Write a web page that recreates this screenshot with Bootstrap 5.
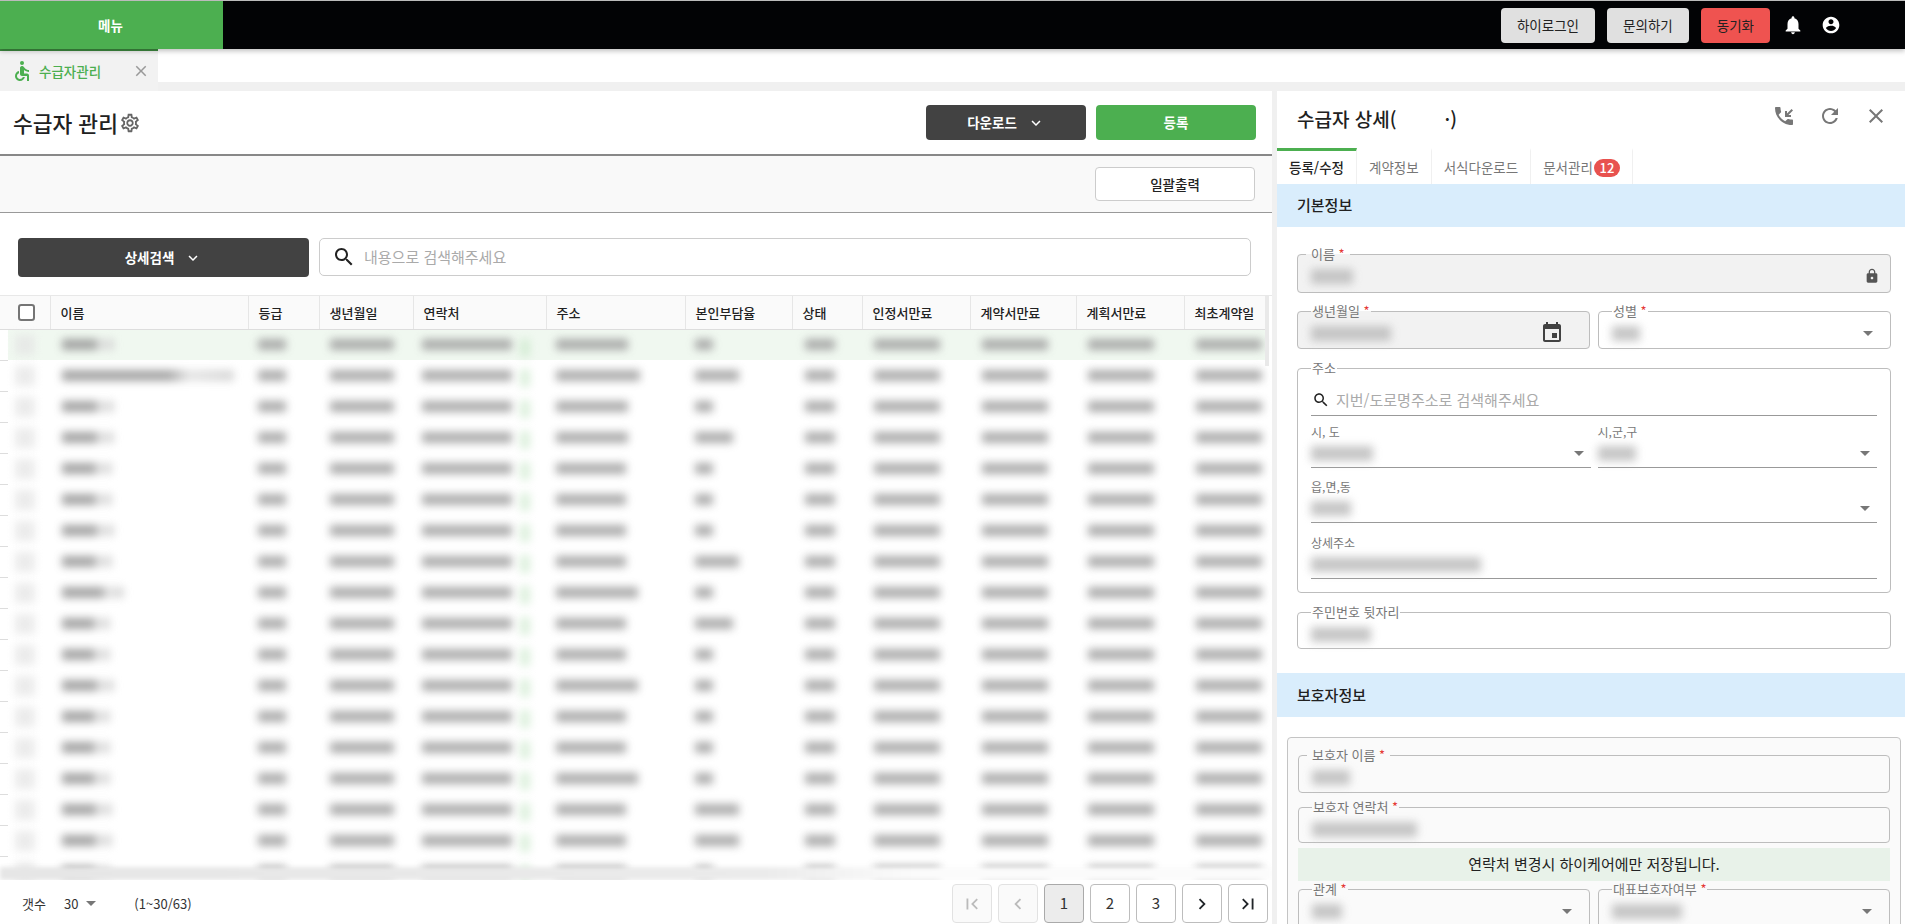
<!DOCTYPE html>
<html lang="ko">
<head>
<meta charset="utf-8">
<title>수급자 관리</title>
<link href="https://cdn.jsdelivr.net/npm/bootstrap@5.3.0/dist/css/bootstrap.min.css" rel="stylesheet">
<style>
html,body{height:924px;overflow:hidden}
body{background:#f0f0f0;color:#212121;font-family:"Noto Sans CJK KR","Noto Sans",sans-serif;font-size:13px}
.ic{fill:currentColor;display:block;flex:none}
.topbar{height:49px;background:#020305;border-top:1px solid #bbb;box-shadow:0 2px 5px rgba(0,0,0,.25);position:relative;z-index:2}
.menu-cell{width:223px;background:#4caf50;color:#fff;font-size:13.5px;font-weight:700;padding-right:2px}
.top-actions{padding-right:64px}
.top-btn{height:35px;padding:0 16px;font-size:13.5px;border:0;border-radius:4px;background:#e0e0e0;color:#222;line-height:35px;margin-right:12px}
.top-btn.sync{background:#ef5350;margin-right:12px}
.top-user{margin-left:17px}
.tabbar{height:33px;background:#fff}
.page-tab{width:158px;height:42px;background:#f2f2f2;border-top:2px solid #3d8b40;color:#4caf50;padding-left:10px;font-size:13.5px;font-weight:500;margin-right:2px;gap:5px}
.page-tab .shut{color:#999;margin-left:auto;margin-right:8px}
.tab-gap{height:9px}
.workspace{height:833px}
.left-pane{width:1272px;background:#fff}
.right-pane{width:628px;margin-left:5px;background:#fff;overflow:hidden}
.head-row{height:63px;padding:14px 16px 14px 13px}
.title-wrap{gap:1px;padding-top:3px}
.page-title{font-size:21.5px;font-weight:500;margin:0;line-height:30px}
.gear{color:#666}
.head-actions{gap:10px}
.rule-thick{height:2px;background:#888}
.tool-row{height:57px;background:#f9f9f9;border-bottom:1px solid #999;padding:11px 17px 0 0}
.act-btn{height:35px;width:160px;border:0;border-radius:4px;font-size:13.5px;font-weight:700;color:#fff;padding:0;display:flex;align-items:center;justify-content:center;gap:10px}
.act-dark{background:#424242}
.act-dark:hover{background:#424242;color:#fff}
.act-green{background:#4caf50}
.act-white{height:34px;background:#fff;color:#222;border:1px solid #ccc;font-weight:500}
.search-row{padding:25px 21px 18px 18px;gap:10px}
.act-wide{width:291px;height:39px}
.search-box{flex:1;height:38px;border:1px solid #ccc;border-radius:5px;padding:0 12px;gap:8px;color:#222}
.search-box input,.addr-search input{border:0;outline:0;padding:0;flex:1;font-size:15px;background:transparent}
input::placeholder{color:#aaa;opacity:1}
.grid-wrap{height:585px;overflow:hidden;position:relative;border-top:1px solid #e8e8e8}
.data-grid{table-layout:fixed;width:1265px;border-collapse:collapse;margin:0}
.data-grid col:nth-child(1){width:8px}
.data-grid col:nth-child(2){width:42px}
.data-grid col:nth-child(3){width:198px}
.data-grid col:nth-child(4){width:71px}
.data-grid col:nth-child(5){width:94px}
.data-grid col:nth-child(6){width:133px}
.data-grid col:nth-child(7){width:139px}
.data-grid col:nth-child(8){width:107px}
.data-grid col:nth-child(9){width:70px}
.data-grid col:nth-child(10){width:108px}
.data-grid col:nth-child(11){width:106px}
.data-grid col:nth-child(12){width:108px}
.data-grid col:nth-child(13){width:81px}
.data-grid th{height:33px;background:#fafafa;font-size:13px;font-weight:500;padding:0 0 0 10px;border-right:1px solid #e6e6e6;border-bottom:1px solid #ddd;color:#222;vertical-align:middle}
.data-grid th:last-child{border-right:0}
.data-grid td{height:31px;padding:0 0 0 10px;border:0;position:relative;vertical-align:middle}
.data-grid td.tick{padding:0;border-bottom:1px solid #ddd}
.data-grid tr.picked td:not(.tick){background:#f0f8f0}
.data-grid td.box-cell{padding:0 0 0 7px}
.hcheck{width:17px;height:17px;margin:0 0 0 18px;display:block;border:2px solid #757575;border-radius:2px}
.smear{display:block;height:11px;background:#a0a0a0;filter:blur(4px);opacity:.85}
.smear.fade-end{background:linear-gradient(90deg,#959595 0,#959595 62%,#e0e0e0 74%,#cfcfcf 100%)}
.smear.pale{background:#e4e4e4;height:20px;opacity:.7}
.smear.mint{background:#bfe3c0;width:10px;height:18px;position:absolute;top:9px;right:16px;opacity:.55}
.v-scroll{width:4px;background:#e9e9e9;position:absolute;right:3px;top:0;height:70px}
.h-scroll{position:absolute;left:0;right:0;bottom:0;height:13px;background:linear-gradient(90deg,#e6e6e6 0,#ebebeb 60%,#fbfbfb 72%,#fbfbfb 100%);filter:blur(2px)}
.pager-row{height:44px;padding:4px 4px 0 22px;font-size:13px;color:#333}
.pager-info{height:39px}
.size-val{margin-left:18px}
.range-txt{margin-left:38px}
.pager-nav{gap:6px}
.caret-down{width:0;height:0;border-left:5px solid transparent;border-right:5px solid transparent;border-top:5px solid #777;flex:none}
.page-btn{width:40px;height:39px;padding:0;border:1px solid #bdbdbd;border-radius:4px;background:#fff;color:#333;font-size:15px;display:flex;align-items:center;justify-content:center}
.page-btn.off{color:#bbb;border-color:#e2e2e2;background:#fafafa}
.page-btn.now{background:#ececec;border-color:#aaa}
.detail-head{height:57px;padding:0 20px}
.detail-title{font-size:19px;font-weight:500;margin:0;display:flex}
.detail-title i{width:48px}
.detail-ico{color:#777;gap:22px;margin-top:-8px;margin-right:-3px}
.tab-strip{height:36px;flex-wrap:nowrap}
.tab-strip .nav-link{height:36px;padding:0 12px;color:#777;font-size:13.5px;border-top:3px solid transparent;border-right:1px solid #f0f0f0;border-radius:0;display:flex;align-items:center}
.tab-strip .nav-link.active{color:#222;border-top-color:#4caf50;font-weight:500}
.tab-count{background:#e8524f;width:26px;height:18px;padding:0;border-radius:9px;font-size:13px;line-height:18px;font-weight:500;margin-left:1px}
.band{height:43px;background:#d9edfc;font-size:15px;font-weight:500;padding-left:20px;display:flex;align-items:center}
.band-tall{height:44px}
.band-body{padding:20px 14px 24px 20px}
.fs{border:1px solid #bdbdbd;border-radius:4px;margin:0;padding:0 13px;min-width:0;background:transparent}
.fs legend{float:none;width:auto;font-size:13px;line-height:14px;color:#777;margin:0;padding:0 1px}
.fs legend.roomy{margin-left:-5px;padding:0 5px}
.fs .req{color:#e53935}
.fs.locked{background:#f2f2f2}
.fs-line{display:flex;align-items:center;justify-content:space-between;height:30px}
.h46{height:46px}.h45{height:45px}.h44{height:44px}.h43{height:43px}
.mt-11{margin-top:11px}.mt-12{margin-top:12px}.mt-13{margin-top:13px}.mt-9{margin-top:9px}.mt-7{margin-top:7px}
.lock-ic{color:#555;margin-right:-3px}
.date-ic{color:#424242;margin-right:12px}
.end-caret{margin-right:4px}
.addr-box{height:232px}
.addr-search{height:31px;margin-top:10px;border-bottom:1px solid #999;gap:6px;color:#222;padding-left:1px}
.sub-pair{gap:7px}
.sub-field{flex:1 1 0;min-width:0}
.sub-label{font-size:12px;line-height:14px;color:#777}
.sub-value{height:28px;border-bottom:1px solid #999;display:flex;align-items:center;justify-content:space-between;padding-right:7px;box-sizing:content-box}
.smear.field{background:#bdbdbd;height:15px}
.w28{width:28px}.w30{width:30px}.w38{width:38px}.w40{width:40px}.w42{width:42px}.w60{width:60px}.w62{width:62px}.w70{width:70px}.w80{width:80px}.w105{width:105px}.w170{width:170px}
.guard-card{margin:20px 4px 0 10px;padding:10px;border:1px solid #c4c4c4;border-radius:4px;background:#fafafa}
.guard-note{height:33px;margin-top:5px;background:#e8f2e9;font-size:15px;display:flex;align-items:center;justify-content:center;color:#222}
.guard-split{margin-top:1px}
</style>
</head>
<body>
<svg class="d-none" xmlns="http://www.w3.org/2000/svg">
<symbol id="i-access" viewBox="0 0 24 24"><circle cx="12" cy="4" r="2"/><path d="M19 13v-2c-1.54.02-3.09-.75-4.07-1.83l-1.29-1.43c-.17-.19-.38-.34-.61-.45-.01 0-.01-.01-.02-.01H13c-.35-.2-.75-.3-1.19-.26C10.76 7.11 10 8.04 10 9.09V15c0 1.1.9 2 2 2h5v5h2v-5.5c0-1.1-.9-2-2-2h-3v-3.45c1.29 1.07 3.25 1.94 5 1.95zm-6.17 5c-.41 1.16-1.52 2-2.83 2-1.66 0-3-1.34-3-3 0-1.31.84-2.41 2-2.83V12.1c-2.28.46-4 2.48-4 4.9 0 2.76 2.24 5 5 5 2.42 0 4.44-1.72 4.9-4h-2.07z"/></symbol>
<symbol id="i-gear" viewBox="0 0 24 24"><path d="M19.43 12.98c.04-.32.07-.64.07-.98 0-.34-.03-.66-.07-.98l2.11-1.65c.19-.15.24-.42.12-.64l-2-3.46c-.09-.16-.26-.25-.44-.25-.06 0-.12.01-.17.03l-2.49 1c-.52-.4-1.08-.73-1.69-.98l-.38-2.65C14.46 2.18 14.25 2 14 2h-4c-.25 0-.46.18-.49.42l-.38 2.65c-.61.25-1.17.59-1.69.98l-2.49-1c-.06-.02-.12-.03-.18-.03-.17 0-.34.09-.43.25l-2 3.46c-.13.22-.07.49.12.64l2.11 1.65c-.04.32-.07.65-.07.98 0 .33.03.66.07.98l-2.11 1.65c-.19.15-.24.42-.12.64l2 3.46c.09.16.26.25.44.25.06 0 .12-.01.17-.03l2.49-1c.52.4 1.08.73 1.69.98l.38 2.65c.03.24.24.42.49.42h4c.25 0 .46-.18.49-.42l.38-2.65c.61-.25 1.17-.59 1.69-.98l2.49 1c.06.02.12.03.18.03.17 0 .34-.09.43-.25l2-3.46c.12-.22.07-.49-.12-.64l-2.11-1.65zm-1.98-1.71c.04.31.05.52.05.73 0 .21-.02.43-.05.73l-.14 1.13.89.7 1.08.84-.7 1.21-1.27-.51-1.04-.42-.9.68c-.43.32-.84.56-1.25.73l-1.06.43-.16 1.13-.2 1.35h-1.4l-.19-1.35-.16-1.13-1.06-.43c-.43-.18-.83-.41-1.23-.71l-.91-.7-1.06.43-1.27.51-.7-1.21 1.08-.84.89-.7-.14-1.13c-.03-.31-.05-.54-.05-.74s.02-.43.05-.73l.14-1.13-.89-.7-1.08-.84.7-1.21 1.27.51 1.04.42.9-.68c.43-.32.84-.56 1.25-.73l1.06-.43.16-1.13.2-1.35h1.39l.19 1.35.16 1.13 1.06.43c.43.18.83.41 1.23.71l.91.7 1.06-.43 1.27-.51.7 1.21-1.07.85-.89.7.14 1.13zM12 8c-2.21 0-4 1.79-4 4s1.79 4 4 4 4-1.79 4-4-1.79-4-4-4zm0 6c-1.1 0-2-.9-2-2s.9-2 2-2 2 .9 2 2-.9 2-2 2z"/></symbol>
<symbol id="i-bell" viewBox="0 0 24 24"><path d="M12 22c1.1 0 2-.9 2-2h-4c0 1.1.9 2 2 2zm6-6v-5c0-3.07-1.63-5.64-4.5-6.32V4c0-.83-.67-1.5-1.5-1.5s-1.5.67-1.5 1.5v.68C7.64 5.36 6 7.92 6 11v5l-2 2v1h16v-1l-2-2z"/></symbol>
<symbol id="i-user" viewBox="0 0 24 24"><path d="M12 2C6.48 2 2 6.48 2 12s4.48 10 10 10 10-4.48 10-10S17.52 2 12 2zm0 3c1.66 0 3 1.34 3 3s-1.34 3-3 3-3-1.34-3-3 1.34-3 3-3zm0 14.2c-2.5 0-4.71-1.28-6-3.22.03-1.99 4-3.08 6-3.08 1.99 0 5.97 1.09 6 3.08-1.29 1.94-3.5 3.22-6 3.22z"/></symbol>
<symbol id="i-call" viewBox="0 0 24 24"><path d="M20 15.5c-1.25 0-2.45-.2-3.57-.57-.35-.11-.74-.03-1.02.24l-2.2 2.2c-2.83-1.44-5.15-3.75-6.59-6.59l2.2-2.21c.28-.26.36-.65.25-1C8.7 6.45 8.5 5.25 8.5 4c0-.55-.45-1-1-1H4c-.55 0-1 .45-1 1 0 9.39 7.61 17 17 17 .55 0 1-.45 1-1v-3.5c0-.55-.45-1-1-1zM21 6.41L19.59 5 15 9.59V7h-2v6h6v-2h-2.59z"/></symbol>
<symbol id="i-refresh" viewBox="0 0 24 24"><path d="M17.65 6.35C16.2 4.9 14.21 4 12 4c-4.42 0-7.99 3.58-7.99 8s3.57 8 7.99 8c3.73 0 6.84-2.55 7.73-6h-2.08c-.82 2.33-3.04 4-5.65 4-3.31 0-6-2.69-6-6s2.69-6 6-6c1.66 0 3.14.69 4.22 1.78L13 11h7V4l-2.35 2.35z"/></symbol>
<symbol id="i-close" viewBox="0 0 24 24"><path d="M19 6.41 17.59 5 12 10.59 6.41 5 5 6.41 10.59 12 5 17.59 6.41 19 12 13.41 17.59 19 19 17.59 13.41 12z"/></symbol>
<symbol id="i-search" viewBox="0 0 24 24"><path d="M15.5 14h-.79l-.28-.27C15.41 12.59 16 11.11 16 9.5 16 5.91 13.09 3 9.5 3S3 5.91 3 9.5 5.91 16 9.5 16c1.61 0 3.09-.59 4.23-1.57l.27.28v.79l5 4.99L20.49 19l-4.99-5zm-6 0C7.01 14 5 11.99 5 9.5S7.01 5 9.5 5 14 7.01 14 9.5 11.99 14 9.5 14z"/></symbol>
<symbol id="i-lock" viewBox="0 0 24 24"><path d="M18 8h-1V6c0-2.76-2.24-5-5-5S7 3.24 7 6v2H6c-1.1 0-2 .9-2 2v10c0 1.1.9 2 2 2h12c1.1 0 2-.9 2-2V10c0-1.1-.9-2-2-2zm-6 9c-1.1 0-2-.9-2-2s.9-2 2-2 2 .9 2 2-.9 2-2 2zm3.1-9H8.9V6c0-1.71 1.39-3.1 3.1-3.1 1.71 0 3.1 1.39 3.1 3.1v2z"/></symbol>
<symbol id="i-event" viewBox="0 0 24 24"><path d="M17 12h-5v5h5v-5zM16 1v2H8V1H6v2H5c-1.11 0-1.99.9-1.99 2L3 19c0 1.1.89 2 2 2h14c1.1 0 2-.9 2-2V5c0-1.1-.9-2-2-2h-1V1h-2zm3 18H5V8h14v11z"/></symbol>
<symbol id="i-down" viewBox="0 0 24 24"><path d="M16.59 8.59 12 13.17 7.41 8.59 6 10l6 6 6-6z"/></symbol>
<symbol id="i-first" viewBox="0 0 24 24"><path d="M18.41 16.59 13.82 12l4.59-4.59L17 6l-6 6 6 6zM6 6h2v12H6z"/></symbol>
<symbol id="i-prev" viewBox="0 0 24 24"><path d="M15.41 7.41 14 6l-6 6 6 6 1.41-1.41L10.83 12z"/></symbol>
<symbol id="i-next" viewBox="0 0 24 24"><path d="M10 6 8.59 7.41 13.17 12l-4.58 4.59L10 18l6-6z"/></symbol>
<symbol id="i-last" viewBox="0 0 24 24"><path d="M5.59 7.41 10.18 12l-4.59 4.59L7 18l6-6-6-6zM16 6h2v12h-2z"/></symbol>
</svg>

<header class="topbar d-flex align-items-stretch">
  <div class="menu-cell d-flex align-items-center justify-content-center">메뉴</div>
  <div class="ms-auto d-flex align-items-center top-actions">
    <button class="btn top-btn" type="button">하이로그인</button>
    <button class="btn top-btn" type="button">문의하기</button>
    <button class="btn top-btn sync" type="button">동기화</button>
    <svg class="ic text-white" width="22" height="22"><use href="#i-bell"/></svg>
    <svg class="ic text-white top-user" width="20" height="20"><use href="#i-user"/></svg>
  </div>
</header>

<div class="tabbar d-flex">
  <div class="page-tab d-flex align-items-center">
    <svg class="ic" width="24" height="24"><use href="#i-access"/></svg>
    <span>수급자관리</span>
    <svg class="ic shut" width="18" height="18"><use href="#i-close"/></svg>
  </div>
</div>
<div class="tab-gap"></div>

<main class="workspace d-flex">
  <section class="left-pane d-flex flex-column">
    <div class="head-row d-flex align-items-start">
      <div class="d-flex align-items-center title-wrap">
        <h1 class="page-title">수급자 관리</h1>
        <svg class="ic gear" width="22" height="22"><use href="#i-gear"/></svg>
      </div>
      <div class="ms-auto d-flex head-actions">
        <button class="btn act-btn act-dark" type="button">다운로드 <svg class="ic" width="18" height="18"><use href="#i-down"/></svg></button>
        <button class="btn act-btn act-green" type="button">등록</button>
      </div>
    </div>
    <div class="rule-thick"></div>
    <div class="tool-row d-flex justify-content-end">
      <button class="btn act-btn act-white" type="button">일괄출력</button>
    </div>
    <div class="search-row d-flex">
      <button class="btn act-btn act-dark act-wide" type="button">상세검색 <svg class="ic" width="18" height="18"><use href="#i-down"/></svg></button>
      <label class="search-box d-flex align-items-center">
        <svg class="ic" width="24" height="24"><use href="#i-search"/></svg>
        <input type="text" placeholder="내용으로 검색해주세요">
      </label>
    </div>
    <div class="grid-wrap">
      <table class="table data-grid">
        <colgroup><col><col><col><col><col><col><col><col><col><col><col><col><col></colgroup>
        <thead>
          <tr>
            <th colspan="2" class="p-0"><input class="form-check-input hcheck" type="checkbox" aria-label="전체 선택"></th>
            <th>이름</th><th>등급</th><th>생년월일</th><th>연락처</th><th>주소</th><th>본인부담율</th><th>상태</th><th>인정서만료</th><th>계약서만료</th><th>계획서만료</th><th>최초계약일</th>
          </tr>
        </thead>
        <tbody id="rows"></tbody>
      </table>
      <div class="v-scroll"></div>
      <div class="h-scroll"></div>
    </div>
    <div class="pager-row d-flex align-items-start">
      <div class="d-flex align-items-center pager-info">
        <span>갯수</span>
        <span class="size-val">30</span>
        <span class="caret-down ms-2"></span>
        <span class="range-txt">(1~30/63)</span>
      </div>
      <nav class="ms-auto d-flex pager-nav">
        <button class="page-btn off" type="button" aria-label="처음"><svg class="ic" width="22" height="22"><use href="#i-first"/></svg></button>
        <button class="page-btn off" type="button" aria-label="이전"><svg class="ic" width="22" height="22"><use href="#i-prev"/></svg></button>
        <button class="page-btn now" type="button">1</button>
        <button class="page-btn" type="button">2</button>
        <button class="page-btn" type="button">3</button>
        <button class="page-btn" type="button" aria-label="다음"><svg class="ic text-dark" width="22" height="22"><use href="#i-next"/></svg></button>
        <button class="page-btn" type="button" aria-label="마지막"><svg class="ic text-dark" width="22" height="22"><use href="#i-last"/></svg></button>
      </nav>
    </div>
  </section>

  <section class="right-pane">
    <div class="detail-head d-flex align-items-center">
      <h2 class="detail-title">수급자 상세(<i></i>·)</h2>
      <div class="ms-auto d-flex detail-ico">
        <svg class="ic" width="24" height="24"><use href="#i-call"/></svg>
        <svg class="ic" width="24" height="24"><use href="#i-refresh"/></svg>
        <svg class="ic" width="24" height="24"><use href="#i-close"/></svg>
      </div>
    </div>
    <nav class="nav tab-strip">
      <a class="nav-link active" href="#">등록/수정</a>
      <a class="nav-link" href="#">계약정보</a>
      <a class="nav-link" href="#">서식다운로드</a>
      <a class="nav-link" href="#">문서관리<span class="badge tab-count">12</span></a>
    </nav>

    <div class="band">기본정보</div>
    <div class="band-body">
      <fieldset class="fs locked h46">
        <legend class="roomy">이름 <span class="req">*</span></legend>
        <div class="fs-line">
          <span class="smear field w42"></span>
          <svg class="ic lock-ic" width="16" height="16"><use href="#i-lock"/></svg>
        </div>
      </fieldset>
      <div class="d-flex gap-2 mt-11">
        <fieldset class="fs locked h45 sub-field">
          <legend>생년월일 <span class="req">*</span></legend>
          <div class="fs-line">
            <span class="smear field w80"></span>
            <svg class="ic date-ic" width="24" height="24"><use href="#i-event"/></svg>
          </div>
        </fieldset>
        <fieldset class="fs h45 sub-field">
          <legend>성별 <span class="req">*</span></legend>
          <div class="fs-line">
            <span class="smear field w28"></span>
            <span class="caret-down end-caret"></span>
          </div>
        </fieldset>
      </div>
      <fieldset class="fs addr-box mt-12">
        <legend>주소</legend>
        <label class="addr-search d-flex align-items-center">
          <svg class="ic" width="18" height="18"><use href="#i-search"/></svg>
          <input type="text" placeholder="지번/도로명주소로 검색해주세요">
        </label>
        <div class="d-flex sub-pair mt-9">
          <div class="sub-field">
            <div class="sub-label">시, 도</div>
            <div class="sub-value"><span class="smear field w62"></span><span class="caret-down"></span></div>
          </div>
          <div class="sub-field">
            <div class="sub-label">시,군,구</div>
            <div class="sub-value"><span class="smear field w38"></span><span class="caret-down"></span></div>
          </div>
        </div>
        <div class="mt-12">
          <div class="sub-label">읍,면,동</div>
          <div class="sub-value"><span class="smear field w40"></span><span class="caret-down"></span></div>
        </div>
        <div class="mt-13">
          <div class="sub-label">상세주소</div>
          <div class="sub-value"><span class="smear field w170"></span></div>
        </div>
      </fieldset>
      <fieldset class="fs h44 mt-12">
        <legend>주민번호 뒷자리</legend>
        <div class="fs-line"><span class="smear field w60"></span></div>
      </fieldset>
    </div>

    <div class="band band-tall">보호자정보</div>
    <div class="guard-card">
      <fieldset class="fs h45">
        <legend class="roomy">보호자 이름 <span class="req">*</span></legend>
        <div class="fs-line"><span class="smear field w38"></span></div>
      </fieldset>
      <fieldset class="fs h43 mt-7">
        <legend>보호자 연락처 <span class="req">*</span></legend>
        <div class="fs-line"><span class="smear field w105"></span></div>
      </fieldset>
      <div class="guard-note">연락처 변경시 하이케어에만 저장됩니다.</div>
      <div class="d-flex gap-2 guard-split">
        <fieldset class="fs h46 sub-field">
          <legend>관계 <span class="req">*</span></legend>
          <div class="fs-line"><span class="smear field w30"></span><span class="caret-down end-caret"></span></div>
        </fieldset>
        <fieldset class="fs h46 sub-field">
          <legend>대표보호자여부 <span class="req">*</span></legend>
          <div class="fs-line"><span class="smear field w70"></span><span class="caret-down end-caret"></span></div>
        </fieldset>
      </div>
    </div>
  </section>
</main>

<script src="https://cdn.jsdelivr.net/npm/bootstrap@5.3.0/dist/js/bootstrap.bundle.min.js"></script>
<script>
var nameW=[52,172,52,52,50,50,52,50,62,48,48,52,48,48,48,50,50,48];
var addrW=[72,84,72,72,70,70,70,70,82,70,70,82,70,70,82,70,70,70];
var payW=[18,44,18,38,18,18,18,44,18,38,18,18,18,18,18,44,44,18];
var body=document.getElementById('rows');
nameW.forEach(function(n,i){
  var tr=document.createElement('tr');
  if(i===0)tr.className='picked';
  function s(w,m){return '<td><span class="smear" style="width:'+w+'px;margin-left:'+m+'px"></span></td>';}
  tr.innerHTML='<td class="tick"></td>'+
    '<td class="box-cell"><span class="smear pale" style="width:20px"></span></td>'+
    '<td><span class="smear fade-end" style="width:'+n+'px;margin-left:2px"></span></td>'+
    s(28,0)+s(64,1)+
    '<td><span class="smear" style="width:90px;margin-left:-1px"></span><span class="smear mint"></span></td>'+
    s(addrW[i],0)+s(payW[i],0)+s(30,3)+s(66,2)+s(66,2)+s(66,2)+s(66,2);
  body.appendChild(tr);
});
</script>
</body>
</html>
